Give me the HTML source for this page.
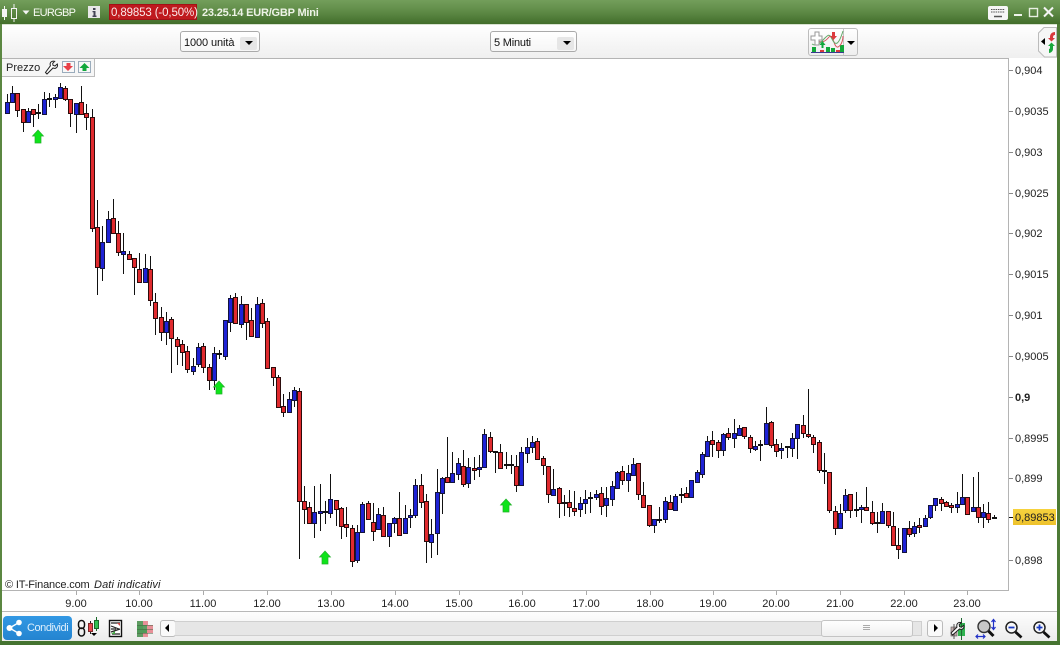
<!DOCTYPE html>
<html><head><meta charset="utf-8"><title>EURGBP</title>
<style>
html,body{margin:0;padding:0;width:1060px;height:645px;overflow:hidden;background:#fff;font-family:"Liberation Sans",sans-serif;font-size:11px;color:#111}
div,span{position:absolute;white-space:nowrap}
svg{position:absolute;overflow:visible}
.p{left:1015px;width:42px;height:14px;line-height:14px;font-size:11px;color:#222}
.t{top:597px;width:40px;text-align:center;line-height:14px;font-size:11px;color:#222}
.k{top:591px;width:1px;height:4px;background:#aaa}
.m{left:1009px;width:4px;height:1px;background:#888}
.dd{background:linear-gradient(#fff,#f6f6f6);border:1px solid #aaa;border-radius:3px;height:19px;line-height:20px;box-sizing:content-box}
.ar{width:17px;height:13px;top:5px;background:#e6e6e6;border-radius:2px}
.tri{width:0;height:0;border-left:4px solid transparent;border-right:4px solid transparent;border-top:4px solid #000}
.w{color:#f2f6ec;font-size:11.5px;line-height:16px}
</style></head><body>
<!-- frame -->
<div style="left:0;top:0;width:1060px;height:24px;background:linear-gradient(#739e5b,#608c48 45%,#426e2b)"></div>
<div style="left:0;top:24px;width:1060px;height:1px;background:#d8e2d0"></div>
<div style="left:0;top:25px;width:1060px;height:33px;background:linear-gradient(#fff,#efefef)"></div>
<div style="left:0;top:58px;width:1008px;height:1px;background:#b4b4b4"></div>
<div style="left:1008px;top:58px;width:1px;height:533px;background:#b4b4b4"></div>
<div style="left:0;top:590px;width:1008px;height:1px;background:#b4b4b4"></div>
<div style="left:0;top:611px;width:1060px;height:1px;background:#b8b8b8"></div>
<div style="left:0;top:612px;width:1060px;height:29px;background:linear-gradient(#fdfdfd,#ececec)"></div>
<div style="left:0;top:24px;width:2px;height:621px;background:#5b8741"></div>
<div style="left:1057px;top:24px;width:3px;height:621px;background:#4d7a35"></div>
<div style="left:0;top:641px;width:1060px;height:4px;background:#457330"></div>

<!-- title bar -->
<svg style="left:0;top:0" width="36" height="24">
<path d="M2 9h5v8H2z" fill="#f4f4f4"/><path d="M4.500 6v14" stroke="#f4f4f4"/>
<path d="M11.500 8.500h5v10h-5z" fill="none" stroke="#f4f4f4"/><path d="M14 4v4M14 19v3" stroke="#f4f4f4"/>
<path d="M22.500 10.500h7l-3.500 4z" fill="#f4f4f4"/>
</svg>
<div class="w" style="left:33px;top:5px;font-size:11px;letter-spacing:-.7px;color:#f8fbf4">EURGBP</div>
<svg style="left:88px;top:6px" width="13" height="13"><rect width="12" height="12" fill="#e8e8e8"/><path d="M5 2h2.500v2H5zM4.500 5h3v4.500h1V11h-4V9.500h1V6.300h-1z" fill="#445"/></svg>
<div style="left:109px;top:4px;width:88px;height:16px;background:#bf1a1e;box-shadow:inset 0 0 0 1px #a21216"></div>
<div class="w" style="left:111px;top:5px;font-size:11.5px;letter-spacing:-.13px;color:#fbeaea">0,89853 (-0,50%)</div>
<div class="w" style="left:202px;top:5px;font-size:11px;font-weight:bold;letter-spacing:-.2px;color:#edf3e6">23.25.14 EUR/GBP Mini</div>
<svg style="left:988px;top:5px" width="70" height="17">
<rect x="0" y="1" width="20" height="14" rx="2" fill="#f6f6f6"/>
<path d="M3 4.500h14M3 7h14" stroke="#555" stroke-dasharray="1.500 .8"/><path d="M6 11.500h8" stroke="#555" stroke-width="1.500"/>
<path d="M26 10h8" stroke="#eef3ea" stroke-width="2"/>
<rect x="41.500" y="3.500" width="8" height="8" fill="none" stroke="#e8efe2" stroke-width="1.400"/>
<path d="M56 2.500l9 9M65 2.500l-9 9" stroke="#f4f4f4" stroke-width="2"/>
</svg>

<!-- dropdowns -->
<div class="dd" style="left:180px;top:31px;width:78px"><span style="left:3px;top:1px;font-size:11px;letter-spacing:-.1px">1000 unità</span><span class="ar" style="left:59px"></span><span class="tri" style="left:64px;top:9px"></span></div>
<div class="dd" style="left:490px;top:31px;width:85px"><span style="left:3px;top:1px;font-size:11px;letter-spacing:-.2px">5 Minuti</span><span class="ar" style="left:66px"></span><span class="tri" style="left:72px;top:9px"></span></div>

<!-- indicator button -->
<div style="left:808px;top:28px;width:48px;height:26px;border:1px solid #bdbdbd;border-radius:3px;background:linear-gradient(#fff,#eee)"></div>
<div style="left:843px;top:29px;width:1px;height:26px;background:#c4c4c4"></div>
<svg style="left:811px;top:30px" width="46" height="25">
<path d="M1 17h4v5H1zM15 17h4v5h-4zM20 18h4v4h-4zM29 15h4v7h-4z" fill="#13a83a"/>
<path d="M9 20h4v2H9zM25 20h4v2h-4z" fill="#d8383c"/>
<path d="M0 22.500h33" stroke="#3a3a90"/>
<path d="M4 9c6 5 10 3 14-2s5 12 9 10 5-8 5-11" fill="none" stroke="#d8505a"/>
<path d="M1 14c5 3 8-1 12-5s5-6 8 0 6 8 11-8" fill="none" stroke="#62a868"/>
<path d="M0 6h4V2h4v4h3v4H8v5H4v-5H0z" fill="#fff" stroke="#999"/>
<path d="M11.500 11l3 4h-2v3h-2v-3h-2z" fill="#12a83c"/>
<path d="M21 2h3v4h2l-3.500 4-3.500-4h2z" fill="#dc3a3e"/>
</svg>
<div class="tri" style="left:847px;top:41px"></div>

<!-- right side tab -->
<svg style="left:1036px;top:27px" width="21" height="31">
<path d="M20.500 .5H8L2.500 6v18l6 6h12z" fill="#f6f6f6" stroke="#bbb"/>
<path d="M5 14.500l4-3.500v7z" fill="#000"/>
<path d="M19 5c-3 0-5 2-5 5v1h-2l3.500 3.500L19 11h-2c0-2 .5-3 2-3z" fill="#d8383c"/>
<path d="M13 26c2 0 4-2 4-4v-3h2l-3.500-3.500L12 19h2c0 2 0 3-1 3z" fill="#18a83c"/>
</svg>

<!-- chart -->
<svg style="left:0;top:0" width="1008" height="590" shape-rendering="crispEdges">
<path fill="none" stroke="#111" d="M7.500 94V113M12.500 86V102M17.500 93V117M23.500 109V132M28.500 108V123M33.500 109V127M38.500 104V119M44.500 92V114M49.500 93V107M55.500 94V108M60.500 83V99M65.500 86V101M70.500 99V127M76.500 103V133M81.500 86V114M86.500 104V130M92.500 109V232M97.500 200V295M102.500 226V281M108.500 211V242M113.500 199V234M118.500 221V256M123.500 233V274M129.500 251V259M134.500 258V295M139.500 253V283M145.500 254V283M150.500 256V306M155.500 293V335M161.500 307V341M166.500 312V345M171.500 317V373M177.500 337V365M182.500 340V366M187.500 346V373M193.500 358V375M198.500 343V367M203.500 343V373M209.500 364V390M214.500 347V390M219.500 350V359M225.500 320V360M230.500 295V332M235.500 293V323M241.500 296V328M246.500 304V340M251.500 308V336M257.500 297V337M262.500 299V328M267.500 318V368M273.500 367V386M278.500 375V407M283.500 394V417M289.500 392V413M294.500 387V407M299.500 388V559M304.500 486V524M309.500 502V523M314.500 486V538M320.500 484V531M325.500 501V524M330.500 474V518M336.500 500V526M341.500 507V539M346.500 507V537M352.500 525V567M357.500 525V563M362.500 502V532M368.500 501V519M373.500 503V541M378.500 508V529M383.500 507V536M389.500 523V547M394.500 517V533M399.500 492V535M405.500 505V533M410.500 509V528M415.500 479V518M421.500 474V508M426.500 494V563M431.500 519V558M437.500 469V555M442.500 477V514M447.500 437V482M452.500 452V483M458.500 458V480M463.500 450V487M468.500 458V488M474.500 457V480M479.500 455V477M484.500 429V467M490.500 432V453M495.500 451V473M500.500 444V469M506.500 452V469M511.500 455V474M516.500 455V492M521.500 447V486M527.500 438V463M532.500 436V453M537.500 438V460M543.500 456V475M548.500 466V503M553.500 469V496M559.500 487V518M564.500 495V516M569.500 490V517M574.500 491V516M580.500 497V517M585.500 490V514M590.500 492V513M596.500 490V500M601.500 487V515M606.500 487V517M612.500 481V506M617.500 471V489M622.500 466V485M628.500 465V492M633.500 458V476M638.500 463V500M643.500 482V508M649.500 505V527M654.500 519V533M659.500 507V523M665.500 497V523M670.500 495V509M675.500 494V511M681.500 488V503M686.500 487V498M691.500 480V498M697.500 470V483M702.500 452V478M707.500 436V457M712.500 431V457M718.500 440V458M723.500 433V456M728.500 428V440M734.500 419V448M739.500 425V436M744.500 427V439M750.500 435V453M755.500 441V451M760.500 440V461M766.500 407V445M771.500 421V448M776.500 439V457M781.500 443V459M787.500 446V458M792.500 433V457M797.500 424V459M803.500 415V438M808.500 389V438M813.500 435V453M819.500 440V473M824.500 453V484M829.500 472V513M835.500 506V535M840.500 504V529M845.500 489V513M850.500 494V518M856.500 492V517M861.500 505V523M866.500 487V510M872.500 501V525M877.500 512V533M882.500 503V523M888.500 511V528M893.500 512V545M898.500 528V559M904.500 528V552M909.500 521V537M914.500 522V537M919.500 518V533M925.500 515V526M930.500 505V519M935.500 498V511M941.500 497V511M946.500 501V507M951.500 503V513M957.500 492V513M962.500 474V504M967.500 497V514M973.500 477V512M978.500 472V523M983.500 504V528M988.500 502V523M994.500 515V519"/>
<path fill="none" stroke="#111" stroke-width="2" d="M36 113h5M47 99h5M217 354h5M323 512h5M493 452h5M504 465h5M509 465h5M562 503h5M588 498h5M657 520h5M679 495h5M758 445h5M785 447h5M822 471h5M854 510h5M875 523h5M992 518h5"/>
<path fill="#1e22d6" stroke="#14143c" d="M5.500 102.500h4v11h-4zM10.500 93.500h4v9h-4zM26.500 111.500h4v11h-4zM42.500 99.500h4v15h-4zM53.500 97.500h4v2h-4zM58.500 87.500h4v11h-4zM74.500 103.500h4v11h-4zM100.500 242.500h4v26h-4zM106.500 219.500h4v23h-4zM121.500 251.500h4v3h-4zM143.500 268.500h4v14h-4zM164.500 321.500h4v11h-4zM191.500 366.500h4v5h-4zM196.500 347.500h4v17h-4zM212.500 353.500h4v27h-4zM223.500 320.500h4v36h-4zM228.500 298.500h4v24h-4zM239.500 304.500h4v20h-4zM255.500 304.500h4v33h-4zM287.500 399.500h4v13h-4zM292.500 390.500h4v10h-4zM312.500 512.500h4v11h-4zM318.500 511.500h4v2h-4zM328.500 499.500h4v14h-4zM355.500 532.500h4v28h-4zM360.500 504.500h4v28h-4zM376.500 514.500h4v15h-4zM387.500 523.500h4v13h-4zM392.500 518.500h4v5h-4zM403.500 518.500h4v15h-4zM408.500 515.500h4v2h-4zM413.500 485.500h4v30h-4zM429.500 534.500h4v8h-4zM435.500 492.500h4v41h-4zM440.500 478.500h4v15h-4zM450.500 473.500h4v9h-4zM456.500 463.500h4v11h-4zM466.500 467.500h4v16h-4zM477.500 467.500h4v2h-4zM482.500 434.500h4v33h-4zM519.500 452.500h4v33h-4zM525.500 447.500h4v6h-4zM530.500 442.500h4v5h-4zM551.500 489.500h4v6h-4zM578.500 503.500h4v6h-4zM583.500 499.500h4v4h-4zM594.500 494.500h4v3h-4zM604.500 498.500h4v7h-4zM610.500 486.500h4v13h-4zM615.500 472.500h4v16h-4zM626.500 473.500h4v7h-4zM631.500 464.500h4v11h-4zM652.500 519.500h4v6h-4zM663.500 501.500h4v18h-4zM673.500 496.500h4v14h-4zM689.500 480.500h4v17h-4zM695.500 472.500h4v10h-4zM700.500 454.500h4v20h-4zM705.500 441.500h4v15h-4zM721.500 434.500h4v16h-4zM732.500 433.500h4v5h-4zM737.500 428.500h4v7h-4zM753.500 446.500h4v3h-4zM764.500 423.500h4v21h-4zM779.500 448.500h4v2h-4zM790.500 438.500h4v10h-4zM795.500 424.500h4v14h-4zM838.500 513.500h4v15h-4zM843.500 495.500h4v15h-4zM859.500 507.500h4v2h-4zM880.500 511.500h4v12h-4zM902.500 528.500h4v24h-4zM912.500 526.500h4v7h-4zM923.500 518.500h4v8h-4zM928.500 505.500h4v12h-4zM933.500 498.500h4v7h-4zM955.500 504.500h4v3h-4zM960.500 497.500h4v7h-4zM971.500 507.500h4v4h-4zM981.500 512.500h4v5h-4z"/>
<path fill="#e02a2e" stroke="#2c0c0c" d="M15.500 93.500h4v17h-4zM21.500 109.500h4v13h-4zM31.500 109.500h4v5h-4zM63.500 88.500h4v11h-4zM68.500 99.500h4v14h-4zM79.500 102.500h4v12h-4zM84.500 113.500h4v4h-4zM90.500 117.500h4v111h-4zM95.500 227.500h4v40h-4zM111.500 218.500h4v15h-4zM116.500 233.500h4v19h-4zM127.500 254.500h4v5h-4zM132.500 258.500h4v9h-4zM137.500 269.500h4v13h-4zM148.500 269.500h4v31h-4zM153.500 302.500h4v16h-4zM159.500 317.500h4v15h-4zM169.500 319.500h4v19h-4zM175.500 339.500h4v7h-4zM180.500 344.500h4v8h-4zM185.500 351.500h4v18h-4zM201.500 346.500h4v21h-4zM207.500 367.500h4v13h-4zM233.500 297.500h4v26h-4zM244.500 304.500h4v18h-4zM249.500 320.500h4v16h-4zM260.500 303.500h4v20h-4zM265.500 321.500h4v47h-4zM271.500 367.500h4v10h-4zM276.500 377.500h4v30h-4zM281.500 406.500h4v6h-4zM297.500 391.500h4v110h-4zM302.500 501.500h4v8h-4zM307.500 507.500h4v16h-4zM334.500 500.500h4v9h-4zM339.500 508.500h4v18h-4zM344.500 524.500h4v3h-4zM350.500 528.500h4v33h-4zM366.500 503.500h4v16h-4zM371.500 522.500h4v9h-4zM381.500 515.500h4v21h-4zM397.500 518.500h4v17h-4zM419.500 485.500h4v17h-4zM424.500 501.500h4v40h-4zM445.500 477.500h4v5h-4zM461.500 466.500h4v18h-4zM472.500 468.500h4v2h-4zM488.500 437.500h4v14h-4zM498.500 452.500h4v16h-4zM514.500 466.500h4v19h-4zM535.500 441.500h4v18h-4zM541.500 458.500h4v7h-4zM546.500 466.500h4v28h-4zM557.500 488.500h4v15h-4zM567.500 502.500h4v5h-4zM572.500 508.500h4v3h-4zM599.500 493.500h4v13h-4zM620.500 471.500h4v9h-4zM636.500 463.500h4v31h-4zM641.500 495.500h4v12h-4zM647.500 505.500h4v20h-4zM668.500 502.500h4v7h-4zM684.500 493.500h4v4h-4zM710.500 440.500h4v4h-4zM716.500 442.500h4v8h-4zM726.500 433.500h4v4h-4zM742.500 427.500h4v9h-4zM748.500 437.500h4v11h-4zM769.500 422.500h4v23h-4zM774.500 444.500h4v7h-4zM801.500 425.500h4v8h-4zM806.500 434.500h4v2h-4zM811.500 437.500h4v7h-4zM817.500 442.500h4v28h-4zM827.500 472.500h4v38h-4zM833.500 511.500h4v17h-4zM848.500 494.500h4v16h-4zM864.500 507.500h4v3h-4zM870.500 512.500h4v11h-4zM886.500 511.500h4v14h-4zM891.500 526.500h4v19h-4zM896.500 545.500h4v4h-4zM907.500 528.500h4v6h-4zM917.500 525.500h4v2h-4zM939.500 499.500h4v4h-4zM944.500 502.500h4v4h-4zM949.500 505.500h4v2h-4zM965.500 497.500h4v17h-4zM976.500 507.500h4v10h-4zM986.500 513.500h4v6h-4z"/>
</svg>

<!-- green arrows -->
<svg style="left:0;top:0" width="1008" height="590">
<path transform="translate(38 130)" d="M0 0l5.500 6H3v7h-6V6h-2.500z" fill="#0ee41a" stroke="#22b02a" stroke-width=".7"/>
<path transform="translate(219 381)" d="M0 0l5.500 6H3v7h-6V6h-2.500z" fill="#0ee41a" stroke="#22b02a" stroke-width=".7"/>
<path transform="translate(325 551)" d="M0 0l5.500 6H3v7h-6V6h-2.500z" fill="#0ee41a" stroke="#22b02a" stroke-width=".7"/>
<path transform="translate(506 499)" d="M0 0l5.500 6H3v7h-6V6h-2.500z" fill="#0ee41a" stroke="#22b02a" stroke-width=".7"/>
</svg>

<!-- Prezzo box -->
<div style="left:2px;top:59px;width:92px;height:17px;background:#f6f6f6;border-right:1px solid #bcbcbc;border-bottom:1px solid #bcbcbc"></div>
<div style="left:6px;top:61px;font-size:11px;line-height:14px;color:#222">Prezzo</div>
<svg style="left:44px;top:60px" width="50" height="15">
<path d="M1.500 12.500l1.500 1.500 6-6c2 .8 4 .2 4.500-2 .2-.8 0-1.500-.2-2l-2.300 2-2-.7-.3-2 2-2c-2-.6-4 .3-4.500 2-.2 1-.2 1.500.2 2.500z" fill="#fff" stroke="#222"/>
<rect x="18.500" y="1.500" width="12" height="11" fill="#f8f8f8" stroke="#9aacbc"/>
<path d="M22.500 3h4v3h2.500l-5 5-5-5h3.500z" fill="#e84048"/>
<rect x="34.500" y="1.500" width="12" height="11" fill="#f8f8f8" stroke="#9aacbc"/>
<path d="M40.500 3l5 5h-3v3h-4V8h-3z" fill="#12a83c"/>
</svg>

<div style="left:5px;top:578px;font-size:11px;line-height:14px;letter-spacing:-.15px;color:#222">© IT-Finance.com</div>
<div style="left:94px;top:578px;font-size:11px;line-height:14px;font-style:italic;letter-spacing:.12px;color:#222">Dati indicativi</div>

<!-- price axis -->
<div class="p" style="top:64px">0,904</div><div class="m" style="top:70px"></div>
<div class="p" style="top:105px">0,9035</div><div class="m" style="top:111px"></div>
<div class="p" style="top:146px">0,903</div><div class="m" style="top:152px"></div>
<div class="p" style="top:187px">0,9025</div><div class="m" style="top:193px"></div>
<div class="p" style="top:227px">0,902</div><div class="m" style="top:233px"></div>
<div class="p" style="top:268px">0,9015</div><div class="m" style="top:274px"></div>
<div class="p" style="top:309px">0,901</div><div class="m" style="top:315px"></div>
<div class="p" style="top:350px">0,9005</div><div class="m" style="top:356px"></div>
<div class="p" style="top:391px;font-weight:bold">0,9</div><div class="m" style="top:397px"></div>
<div class="p" style="top:432px">0,8995</div><div class="m" style="top:438px"></div>
<div class="p" style="top:472px">0,899</div><div class="m" style="top:478px"></div>
<div class="m" style="top:517px;background:#111"></div>
<div style="left:1013px;top:509px;width:43px;height:16px;background:linear-gradient(#f6d33e,#eec22c)"></div>
<div class="p" style="top:511px">0,89853</div>
<div class="p" style="top:554px">0,898</div><div class="m" style="top:560px"></div>

<!-- time axis -->
<div class="k" style="left:76px"></div><div class="t" style="left:56px">9.00</div>
<div class="k" style="left:139px"></div><div class="t" style="left:119px">10.00</div>
<div class="k" style="left:203px"></div><div class="t" style="left:183px">11.00</div>
<div class="k" style="left:267px"></div><div class="t" style="left:247px">12.00</div>
<div class="k" style="left:331px"></div><div class="t" style="left:311px">13.00</div>
<div class="k" style="left:395px"></div><div class="t" style="left:375px">14.00</div>
<div class="k" style="left:459px"></div><div class="t" style="left:439px">15.00</div>
<div class="k" style="left:522px"></div><div class="t" style="left:502px">16.00</div>
<div class="k" style="left:586px"></div><div class="t" style="left:566px">17.00</div>
<div class="k" style="left:650px"></div><div class="t" style="left:630px">18.00</div>
<div class="k" style="left:713px"></div><div class="t" style="left:693px">19.00</div>
<div class="k" style="left:776px"></div><div class="t" style="left:756px">20.00</div>
<div class="k" style="left:840px"></div><div class="t" style="left:820px">21.00</div>
<div class="k" style="left:904px"></div><div class="t" style="left:884px">22.00</div>
<div class="k" style="left:967px"></div><div class="t" style="left:947px">23.00</div>

<!-- bottom toolbar -->
<div style="left:3px;top:616px;width:69px;height:24px;background:linear-gradient(#3298e4,#2484d0);border-radius:4px"></div>
<svg style="left:6px;top:619px" width="16" height="18"><circle cx="3.500" cy="9" r="3" fill="#fff"/><circle cx="13" cy="3.500" r="2.800" fill="#fff"/><circle cx="13" cy="14.500" r="2.800" fill="#fff"/><path d="M3.500 9L13 3.500M3.500 9L13 14.500" stroke="#fff" stroke-width="1.300"/></svg>
<div style="left:27px;top:621px;font-size:11px;line-height:14px;letter-spacing:-.45px;color:#dff0fd">Condividi</div>
<svg style="left:76px;top:616px" width="26" height="26">
<rect x="2.500" y="4.500" width="6" height="8" rx="3" fill="none" stroke="#111" stroke-width="1.500"/>
<rect x="2.500" y="12" width="6" height="8" rx="3" fill="none" stroke="#111" stroke-width="1.500"/>
<path d="M14.500 5v13" stroke="#222"/>
<rect x="12.500" y="7.500" width="4" height="8" fill="#e6484c" stroke="#7a2a2a"/>
<path d="M20.500 1v14" stroke="#1a6a2a"/>
<rect x="18.500" y="4.500" width="4" height="8" fill="#30c050" stroke="#1a6a2a"/>
<path d="M15 17h6l-3 3z" fill="#000"/>
</svg>
<svg style="left:109px;top:620px" width="14" height="18">
<rect x=".5" y=".5" width="12" height="16" fill="#fff" stroke="#111" stroke-width="1.400"/>
<path d="M2 3h9M2 6l8 3M2 9h5M2 12l9-3M3 14h8" stroke="#222" stroke-width="1.200"/>
<path d="M8 3h3v3z" fill="#c44"/><path d="M2 14l4-3v3z" fill="#4a4"/>
</svg>
<svg style="left:136px;top:620px" width="17" height="18">
<path d="M1 1h6v4H1zM1 13h6v4H1zM7 5h4v4H7z" fill="#5e9c62"/>
<path d="M7 1h5v4H7zM11 5h6v4h-6zM7 13h5v4H7z" fill="#e79098"/>
<path d="M1 5h6v4H1zM1 9h10v4H1z" fill="#4f9a58"/>
<path d="M11 9h6v4h-6z" fill="#e79098"/>
<path d="M1 5.500h16M1 9.500h16M1 13.500h16" stroke="#44603e" stroke-width=".6"/>
</svg>
<div style="left:160px;top:620px;width:14px;height:15px;background:#fafafa;border:1px solid #bbb;border-radius:3px"></div>
<svg style="left:164px;top:624px" width="6" height="8"><path d="M5 0v8L1 4z" fill="#000"/></svg>
<div style="left:175px;top:621px;width:746px;height:13px;background:#e6e6e6;border:1px solid #cfcfcf;border-left:none"></div>
<div style="left:821px;top:620px;width:90px;height:15px;background:linear-gradient(#fefefe,#f0f0f0);border:1px solid #c4c4c4;border-radius:3px"></div>
<svg style="left:863px;top:624px" width="8" height="8"><path d="M0 1.500h7M0 3.500h7M0 5.500h7" stroke="#aaa"/></svg>
<div style="left:927px;top:620px;width:14px;height:15px;background:#fafafa;border:1px solid #bbb;border-radius:3px"></div>
<svg style="left:933px;top:624px" width="6" height="8"><path d="M1 0v8l4-4z" fill="#000"/></svg>
<svg style="left:950px;top:618px" width="16" height="22">
<rect x="8" y="5" width="7" height="13" fill="#2fb34f"/><path d="M11.500 0v22" stroke="#1f6a32"/>
<rect x="1" y="9" width="6" height="9" fill="#c0a8a8" stroke="#555" stroke-width=".6"/><path d="M4 6v15" stroke="#555"/>
<path d="M1 15l1.500 2 7-6c2 .8 3.500.3 4.300-1.500.3-.8.2-1.600 0-2.200l-2.300 2-2-.7-.3-2 2-2c-2-.6-3.700.3-4.300 2-.2 1-.2 1.600.1 2.500z" fill="#fff" stroke="#222"/>
</svg>
<svg style="left:975px;top:618px" width="22" height="22">
<circle cx="9" cy="8.500" r="6" fill="#c8c8c8" stroke="#333" stroke-width="1.400"/>
<path d="M13.500 13l5 5" stroke="#111" stroke-width="3"/>
<path d="M18.500 2v9M16.500 4l2-2.500 2 2.500M16.500 9l2 2.500 2-2.500" fill="none" stroke="#2030c8" stroke-width="1.200"/>
<path d="M1 18.500h9M3 16.500l-2 2 2 2M8 16.500l2 2-2 2" fill="none" stroke="#2030c8" stroke-width="1.200"/>
</svg>
<svg style="left:1004px;top:620px" width="20" height="20">
<circle cx="7.500" cy="7.500" r="5.500" fill="#f8f8f8" stroke="#222" stroke-width="1.500"/>
<path d="M4.500 7.500h6" stroke="#1a3ac0" stroke-width="1.800"/>
<path d="M11.500 12l6 5.500" stroke="#111" stroke-width="2.800"/>
</svg>
<svg style="left:1032px;top:620px" width="20" height="20">
<circle cx="7.500" cy="7.500" r="5.500" fill="#f8f8f8" stroke="#222" stroke-width="1.500"/>
<path d="M4.500 7.500h6M7.500 4.500v6" stroke="#1a3ac0" stroke-width="1.800"/>
<path d="M11.500 12l6 5.500" stroke="#111" stroke-width="2.800"/>
</svg>
</body></html>
